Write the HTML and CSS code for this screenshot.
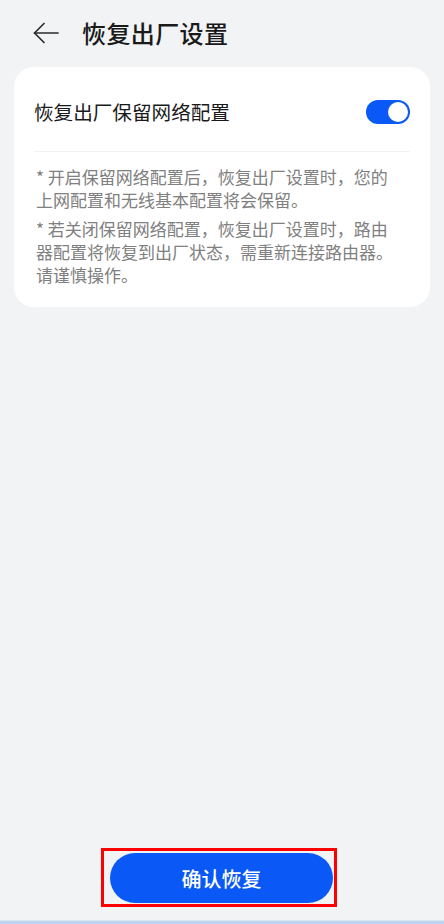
FILE: index.html
```html
<!DOCTYPE html>
<html lang="zh-CN">
  <head>
    <meta charset="UTF-8" />
    <meta name="viewport" content="width=device-width, initial-scale=1.0" />
    <title>恢复出厂设置</title>
    <link rel="stylesheet" href="styles.css">
  </head>
  <body>
    <div class="page">
      <header class="topbar">
        <svg class="back" width="26" height="22" viewBox="0 0 26 22" fill="none" stroke="#2b2b2b" stroke-width="1.7" stroke-linecap="round" stroke-linejoin="round">
          <path d="M25 11H1.5" />
          <path d="M11 1.5L1.5 11L11 20.5" />
        </svg>
        <h1>恢复出厂设置</h1>
      </header>

      <section class="card">
        <div class="row">
          <span class="row-label">恢复出厂保留网络配置</span>
          <span class="switch on"><span class="knob"></span></span>
        </div>
        <div class="notes">
          <p>* 开启保留网络配置后，恢复出厂设置时，您的上网配置和无线基本配置将会保留。</p>
          <p>* 若关闭保留网络配置，恢复出厂设置时，路由器配置将恢复到出厂状态，需重新连接路由器。请谨慎操作。</p>
        </div>
      </section>

      <footer class="actions">
        <div class="confirm-wrap">
          <button class="confirm">确认恢复</button>
        </div>
      </footer>
      <div class="bottom-bar"></div>
    </div>
  </body>
</html>
```

FILE: styles.css
```css
* {
  margin: 0;
  padding: 0;
  box-sizing: border-box;
}

body {
  font-family: "Noto Sans CJK SC", "Noto Sans", sans-serif;
  background: #f1f3f5;
  color: #1a1a1a;
}

.page {
  height: 924px;
  display: flex;
  flex-direction: column;
}

.topbar {
  height: 67px;
  display: flex;
  align-items: center;
  padding: 0 0 2px 33px;
  gap: 23px;
}

.back {
  display: block;
}

.topbar h1 {
  font-size: 24px;
  font-weight: 500;
  color: #1a1a1a;
  line-height: 1;
  letter-spacing: 0.4px;
}

.card {
  margin: 0 14px;
  background: #fff;
  border-radius: 20px;
  padding: 0 20px;
}

.row {
  display: flex;
  align-items: center;
  justify-content: space-between;
  padding: 33px 0 27px;
  border-bottom: 1px solid #f0f0f0;
}

.row-label {
  font-size: 19.6px;
  line-height: 24px;
  color: #1a1a1a;
}

.switch {
  width: 44px;
  height: 24px;
  border-radius: 12px;
  background: #c8c8c8;
  display: flex;
  align-items: center;
  padding: 0 2px;
}

.switch.on {
  background: #0a59f7;
  justify-content: flex-end;
}

.knob {
  width: 20px;
  height: 20px;
  border-radius: 50%;
  background: #fff;
}

.notes {
  padding: 13px 16px 21px 2px;
  font-size: 17px;
  line-height: 23px;
  color: #808080;
}

.notes p + p {
  margin-top: 6px;
}

.actions {
  margin-top: auto;
  display: flex;
  justify-content: center;
  padding-bottom: 13px;
}

.confirm-wrap {
  border: 3px solid #ff0000;
  padding: 2px 1px 1px 6px;
  margin-right: 6px;
}

.confirm {
  display: block;
  width: 223px;
  height: 50px;
  border: none;
  border-radius: 25px;
  background: #0a59f7;
  color: #fff;
  font-family: inherit;
  font-size: 20px;
  font-weight: 500;
}

.bottom-bar {
  height: 4px;
  background: #bdd3ef;
  border-top: 1px solid #dce6f2;
}
```
